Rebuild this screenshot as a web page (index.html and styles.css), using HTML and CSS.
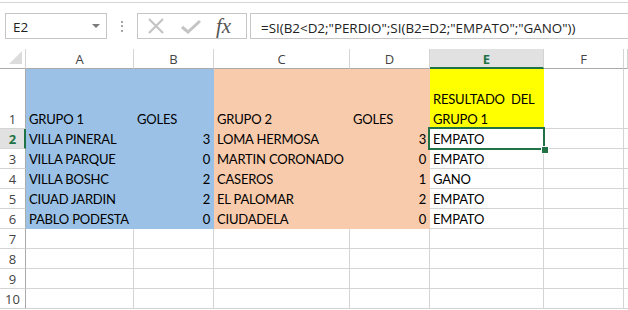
FILE: index.html
```html
<!DOCTYPE html>
<html lang="es">
<head>
<meta charset="utf-8">
<title>Hoja de cálculo</title>
<link rel="stylesheet" href="styles.css">
</head>
<body>
<div class="app">
  <div class="topline"></div>
  <div class="fbar">
    <div class="namebox">
      <span class="ref">E2</span>
      <svg class="caret" width="8" height="4" viewBox="0 0 8 4"><path d="M0 0H8L4 4Z" fill="#7a7a7a"/></svg>
    </div>
    <div class="grip"><i></i><i></i><i></i></div>
    <div class="btns">
      <svg class="ico" width="18" height="16" viewBox="0 0 18 16"><path d="M2 1L16 15M16 1L2 15" stroke="#c4c4c4" stroke-width="2.2" fill="none"/></svg>
      <svg class="ico" width="20" height="16" viewBox="0 0 20 16"><path d="M1 9L7 14L19 3" stroke="#c4c4c4" stroke-width="3" fill="none"/></svg>
      <span class="fx">fx</span>
    </div>
    <div class="formula">=SI(B2&lt;D2;"PERDIO";SI(B2=D2;"EMPATO";"GANO"))</div>
  </div>

  <div class="sheet">
    <div class="corner"><svg width="13" height="13" viewBox="0 0 13 13"><path d="M13 0V13H0Z" fill="#dcdcdc"/></svg></div>
    <div class="ch">A</div><div class="ch">B</div><div class="ch">C</div><div class="ch">D</div><div class="ch csel">E</div><div class="ch">F</div><div class="ch"></div>

    <div class="rh">1</div>
    <div class="c blue">GRUPO 1</div><div class="c blue">GOLES</div>
    <div class="c peach">GRUPO 2</div><div class="c peach">GOLES</div>
    <div class="c yellow"><span class="wrap">RESULTADO&nbsp; DEL<br>GRUPO 1</span></div><div class="c"></div><div class="c"></div>

    <div class="rh rsel">2</div>
    <div class="c blue">VILLA PINERAL</div><div class="c blue n">3</div>
    <div class="c peach">LOMA HERMOSA</div><div class="c peach n">3</div>
    <div class="c">EMPATO</div><div class="c"></div><div class="c"></div>

    <div class="rh">3</div>
    <div class="c blue">VILLA PARQUE</div><div class="c blue n">0</div>
    <div class="c peach">MARTIN CORONADO</div><div class="c peach n">0</div>
    <div class="c">EMPATO</div><div class="c"></div><div class="c"></div>

    <div class="rh">4</div>
    <div class="c blue">VILLA BOSHC</div><div class="c blue n">2</div>
    <div class="c peach">CASEROS</div><div class="c peach n">1</div>
    <div class="c">GANO</div><div class="c"></div><div class="c"></div>

    <div class="rh">5</div>
    <div class="c blue">CIUAD JARDIN</div><div class="c blue n">2</div>
    <div class="c peach">EL PALOMAR</div><div class="c peach n">2</div>
    <div class="c">EMPATO</div><div class="c"></div><div class="c"></div>

    <div class="rh">6</div>
    <div class="c blue">PABLO PODESTA</div><div class="c blue n">0</div>
    <div class="c peach">CIUDADELA</div><div class="c peach n">0</div>
    <div class="c">EMPATO</div><div class="c"></div><div class="c"></div>

    <div class="rh">7</div>
    <div class="c"></div><div class="c"></div><div class="c"></div><div class="c"></div><div class="c"></div><div class="c"></div><div class="c"></div>
    <div class="rh">8</div>
    <div class="c"></div><div class="c"></div><div class="c"></div><div class="c"></div><div class="c"></div><div class="c"></div><div class="c"></div>
    <div class="rh">9</div>
    <div class="c"></div><div class="c"></div><div class="c"></div><div class="c"></div><div class="c"></div><div class="c"></div><div class="c"></div>
    <div class="rh">10</div>
    <div class="c"></div><div class="c"></div><div class="c"></div><div class="c"></div><div class="c"></div><div class="c"></div><div class="c"></div>

    <div class="selbox"><div class="handle"></div></div>
  </div>
</div>
</body>
</html>
```
FILE: styles.css
```css
* { box-sizing: border-box; }
html, body { margin: 0; padding: 0; background: #fff; overflow: hidden; }
.app { width: 628px; height: 310px; position: relative; overflow: hidden; }

.topline { height: 3px; border-bottom: 1px solid #d5d5d5; }

.fbar {
  display: flex;
  align-items: stretch;
  height: 26px;
  margin-top: 10px;
  padding-left: 5px;
  font-family: "Open Sans", "Noto Sans", sans-serif;
  color: #222;
}
.namebox {
  width: 102px;
  border: 1px solid #c6c6c6;
  display: flex;
  align-items: center;
  justify-content: space-between;
  padding: 2px 6px 0 7px;
  font-size: 13.5px;
}
.caret { margin-top: -3px; }
.grip {
  width: 30px;
  display: flex;
  flex-direction: column;
  align-items: center;
  justify-content: center;
  gap: 2.5px;
}
.grip i { display: block; width: 2px; height: 2px; background: #a5a5a5; }
.btns {
  width: 110px;
  border: 1px solid #c6c6c6;
  display: flex;
  align-items: center;
  padding-left: 9px;
  gap: 16px;
}
.fx {
  font-family: "Liberation Serif", "DejaVu Serif", serif;
  font-style: italic;
  font-size: 21px;
  color: #555;
  margin-left: -1px;
  line-height: 1;
}
.formula {
  flex: 1;
  margin-left: 3px;
  margin-right: -2px;
  border: 1px solid #c6c6c6;
  display: flex;
  align-items: center;
  padding: 3px 0 0 10px;
  font-size: 13.4px;
  white-space: nowrap;
}

.sheet {
  position: relative;
  margin-top: 10px;
  display: grid;
  grid-template-columns: 26px 108px 80px 136px 80px 114px 80px 4px;
  grid-template-rows: 20px 60px repeat(9, 20px);
}
.corner {
  border-right: 1px solid #d4d4d4;
  border-bottom: 1px solid #ababab;
  display: flex;
  align-items: flex-end;
  justify-content: flex-end;
  padding: 0 3px 4px 0;
}
.corner svg { display: block; }
.ch {
  border-right: 1px solid #d4d4d4;
  border-bottom: 1px solid #ababab;
  display: flex;
  align-items: center;
  justify-content: center;
  font-family: "Open Sans", "Noto Sans", sans-serif;
  font-size: 13px;
  color: #444;
  padding-top: 1px;
}
.ch.csel {
  background: #e1e1e1;
  border-bottom: 2px solid #217346;
  color: #217346;
  font-weight: bold;
  padding-top: 2px;
}
.rh {
  border-right: 1px solid #ababab;
  border-bottom: 1px solid #d4d4d4;
  display: flex;
  align-items: flex-end;
  justify-content: center;
  font-family: "Open Sans", "Noto Sans", sans-serif;
  font-size: 13px;
  line-height: 17px;
  color: #444;
}
.rh.rsel {
  background: #e1e1e1;
  border-right: 2px solid #217346;
  color: #217346;
  font-weight: bold;
  padding-left: 1px;
}
.c {
  border-right: 1px solid #d4d4d4;
  border-bottom: 1px solid #d4d4d4;
  display: flex;
  align-items: flex-end;
  padding: 0 2px 0 3px;
  font-family: Lato, "Liberation Sans", sans-serif;
  font-size: 13px;
  letter-spacing: -0.2px;
  line-height: 17px;
  color: #000;
  white-space: nowrap;
}
.c.n { justify-content: flex-end; padding-right: 3px; }
.blue { background: #9bc2e6; border-color: #9bc2e6; }
.peach { background: #f8cbad; border-color: #f8cbad; }
.yellow { background: #ffff00; border-color: #ffff00; }
.wrap { display: block; line-height: 20px; margin-bottom: -1px; }

.selbox {
  position: absolute;
  left: 428px;
  top: 78px;
  width: 117px;
  height: 23px;
  border: 2px solid #217346;
  pointer-events: none;
}
.handle {
  position: absolute;
  right: -5px;
  bottom: -5px;
  width: 6px;
  height: 6px;
  background: #217346;
  box-shadow: 0 0 0 1px #fff;
}
```
